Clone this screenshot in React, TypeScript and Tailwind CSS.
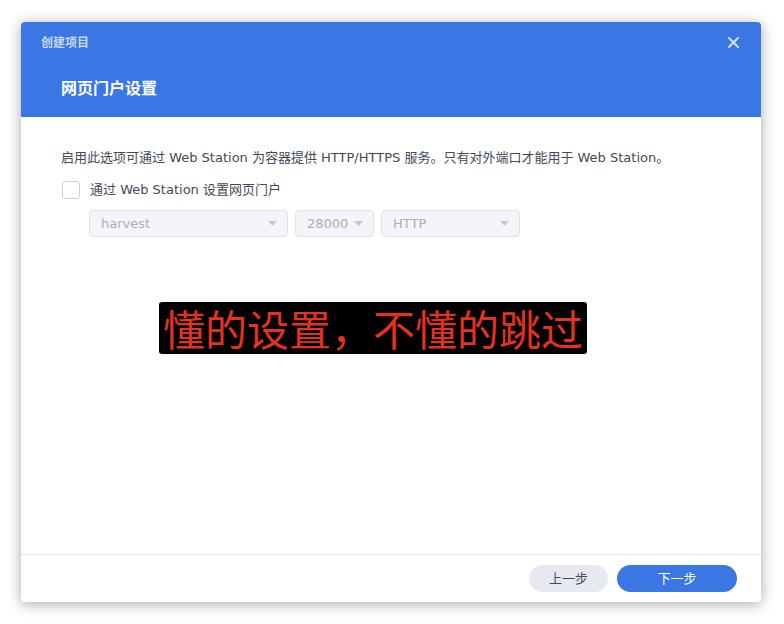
import React from "react";

function Select({ w, label }: { w: string; label: string }) {
  return (
    <div className={`${w} h-[27px] flex items-center justify-between rounded-[4px] border border-[#dde2ea] bg-[#f3f5f8] pl-[11px] pr-[10px] overflow-hidden`}>
      <span className="text-[13px] text-[#a7afbb] whitespace-nowrap overflow-hidden min-w-0">{label}</span>
      <svg width="9" height="5" viewBox="0 0 9 5" className="shrink-0 ml-[6px]">
        <path d="M0 0 L9 0 L4.5 5 Z" fill="#c2c8d1" />
      </svg>
    </div>
  );
}

export default function App() {
  return (
    <div
      className="w-[784px] h-[624px] bg-white pt-[22px] pl-[21px]"
      style={{ fontFamily: '"DejaVu Sans", "Noto Sans CJK SC", sans-serif' }}
    >
      <div className="relative w-[740px] h-[580px] rounded-[4px] bg-white flex flex-col overflow-hidden shadow-[0_2px_14px_rgba(0,0,0,0.35)]">
        <div className="h-[95px] bg-[#3b77e4] flex flex-col shrink-0">
          <div className="h-[40px] flex items-center justify-between pl-[20px] pr-[22px]">
            <span className="text-[12px] text-[#c7d7f6] font-bold leading-none" style={{ fontFamily: '"Noto Sans CJK SC", sans-serif' }}>创建项目</span>
            <svg width="11" height="11" viewBox="0 0 11 11">
              <path d="M1 1 L10 10 M10 1 L1 10" stroke="#d2def7" strokeWidth="2" strokeLinecap="round" />
            </svg>
          </div>
          <div className="pl-[40px] pt-[17px] text-[16px] font-bold text-white leading-none" style={{ fontFamily: '"Noto Sans CJK SC", sans-serif' }}>网页门户设置</div>
        </div>
        <div className="flex-1 pl-[40px] pt-[31px]">
          <div className="text-[13px] text-[#414b57] leading-[20px] whitespace-nowrap">
            启用此选项可通过 Web Station 为容器提供 HTTP/HTTPS 服务。只有对外端口才能用于 Web Station。
          </div>
          <div className="flex items-center mt-[12px] h-[20px]">
            <div className="w-[18px] h-[18px] rounded-[3px] border border-[#ccd3dd] bg-white ml-[1px]" />
            <span className="ml-[10px] text-[13px] text-[#414b57]">通过 Web Station 设置网页门户</span>
          </div>
          <div className="flex gap-[7px] mt-[10px] ml-[28px]">
            <Select w="w-[199px]" label="harvest" />
            <Select w="w-[79px]" label="28000" />
            <Select w="w-[139px]" label="HTTP" />
          </div>
          <div className="mt-[65px] ml-[98px] w-[428px] h-[52px] bg-black rounded-[3px] flex items-center justify-center">
            <span className="text-[42px] leading-none text-[#e3321f]" style={{ fontFamily: '"Noto Sans CJK SC", sans-serif' }}>
              懂的设置，不懂的跳过
            </span>
          </div>
        </div>
        <div className="h-[48px] border-t border-[#e3e8ef] flex items-center justify-end gap-[9px] pr-[24px] shrink-0">
          <div className="w-[79px] h-[27px] rounded-full bg-[#e6e9f0] flex items-center justify-center text-[13px] text-[#414b57]">上一步</div>
          <div className="w-[120px] h-[27px] rounded-full bg-[#3b77e4] flex items-center justify-center text-[13px] text-white">下一步</div>
        </div>
      </div>
    </div>
  );
}
